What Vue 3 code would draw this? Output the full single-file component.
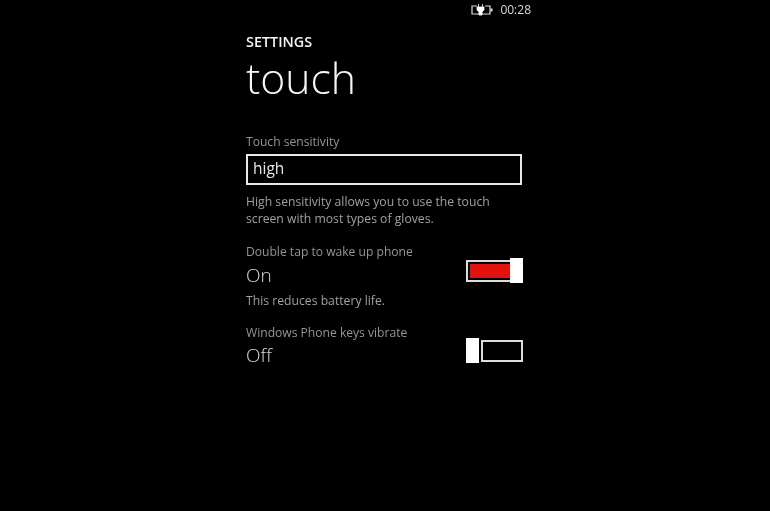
<script setup>
const rows = [
  { label: 'Double tap to wake up phone', value: 'On', on: true, note: 'This reduces battery life.' },
  { label: 'Windows Phone keys vibrate', value: 'Off', on: false, note: '' }
]
</script>

<template>
  <div class="screen">
    <header class="status">
      <svg class="battery" width="22" height="12" viewBox="0 0 22 12" aria-hidden="true">
        <path d="M6 2H1v8h18V2h-5" fill="none" stroke="#ddd" stroke-width="1.2" />
        <path d="M19.5 4.5h2v3h-2z" fill="#ddd" />
        <path d="M7.5 0v3M11.5 0v3M6 3h7v3l-2 2v3H8V8L6 6z" fill="#fff" stroke="#fff" stroke-width="0.8" />
      </svg>
      <span class="time">00:28</span>
    </header>
    <main class="panel">
      <div class="app-title">SETTINGS</div>
      <h1 class="page-title">touch</h1>
      <div class="label first">Touch sensitivity</div>
      <div class="select">high</div>
      <p class="note desc">High sensitivity allows you to use the touch screen with most types of gloves.</p>
      <section v-for="r in rows" :key="r.label" class="setting">
        <div class="setting-main">
          <div class="setting-text">
            <div class="label">{{ r.label }}</div>
            <div class="value">{{ r.value }}</div>
          </div>
          <div class="toggle" :class="{ on: r.on }">
            <div class="track"><div v-if="r.on" class="fill"></div></div>
            <div class="thumb"></div>
          </div>
        </div>
        <p v-if="r.note" class="note after">{{ r.note }}</p>
      </section>
    </main>
  </div>
</template>

<style>
html, body { margin: 0; background: #000; }
</style>

<style scoped>
.screen {
  width: 770px;
  height: 511px;
  background: #000;
  color: #fff;
  font-family: "Open Sans", "Noto Sans", sans-serif;
  overflow: hidden;
  filter: blur(0.35px);
}
.status {
  height: 20px;
  display: flex;
  align-items: center;
  justify-content: flex-end;
  padding-right: 239px;
  gap: 7px;
}
.battery { display: block; }
.time { font-size: 12px; line-height: 20px; color: #d8d8d8; }
.panel {
  width: 277px;
  margin-left: 246px;
  display: flex;
  flex-direction: column;
}
.app-title {
  margin-top: 13px;
  font-size: 14.4px;
  line-height: 18px;
  font-weight: 600;
  color: #f4f4f4;
}
.page-title {
  margin: 5px 0;
  font-size: 42.7px;
  line-height: 44px;
  font-weight: 300;
  color: #f6f6f6;
}
.label {
  font-size: 12.1px;
  line-height: 18px;
  color: #959595;
}
.first { margin-top: 28px; }
.select {
  margin-top: 3px;
  height: 27px;
  width: 267px;
  border: 2px solid #e8e8e8;
  padding-left: 5px;
  font-size: 15.5px;
  line-height: 25px;
  color: #e8e8e8;
}
.note {
  margin: 0;
  font-size: 12.2px;
  line-height: 17px;
  color: #a0a0a0;
}
.desc { margin-top: 8px; width: 260px; }
.setting { margin-top: 16px; }
.setting + .setting { margin-top: 15px; }
.setting-main {
  display: flex;
  justify-content: space-between;
  align-items: flex-end;
}
.value {
  font-size: 19px;
  line-height: 26px;
  margin-top: 1px;
  font-weight: 300;
  color: #d8d8d8;
}
.setting:last-child .value { margin-top: 0; }
.toggle {
  display: flex;
  align-items: center;
  width: 57px;
  height: 25px;
  margin-bottom: 5px;
}
.track {
  flex: 1;
  height: 22px;
  box-sizing: border-box;
  border: 2px solid #ddd;
  padding: 2px;
  order: 2;
}
.toggle.on .track { order: 1; border-right: 0; padding-right: 0; }
.toggle:not(.on) .track { margin-left: 2px; }
.fill { height: 100%; background: #e2130c; }
.thumb {
  order: 1;
  width: 13px;
  height: 25px;
  background: #fff;
}
.toggle.on .thumb { order: 2; }
.after { margin-top: 4px; }
</style>
